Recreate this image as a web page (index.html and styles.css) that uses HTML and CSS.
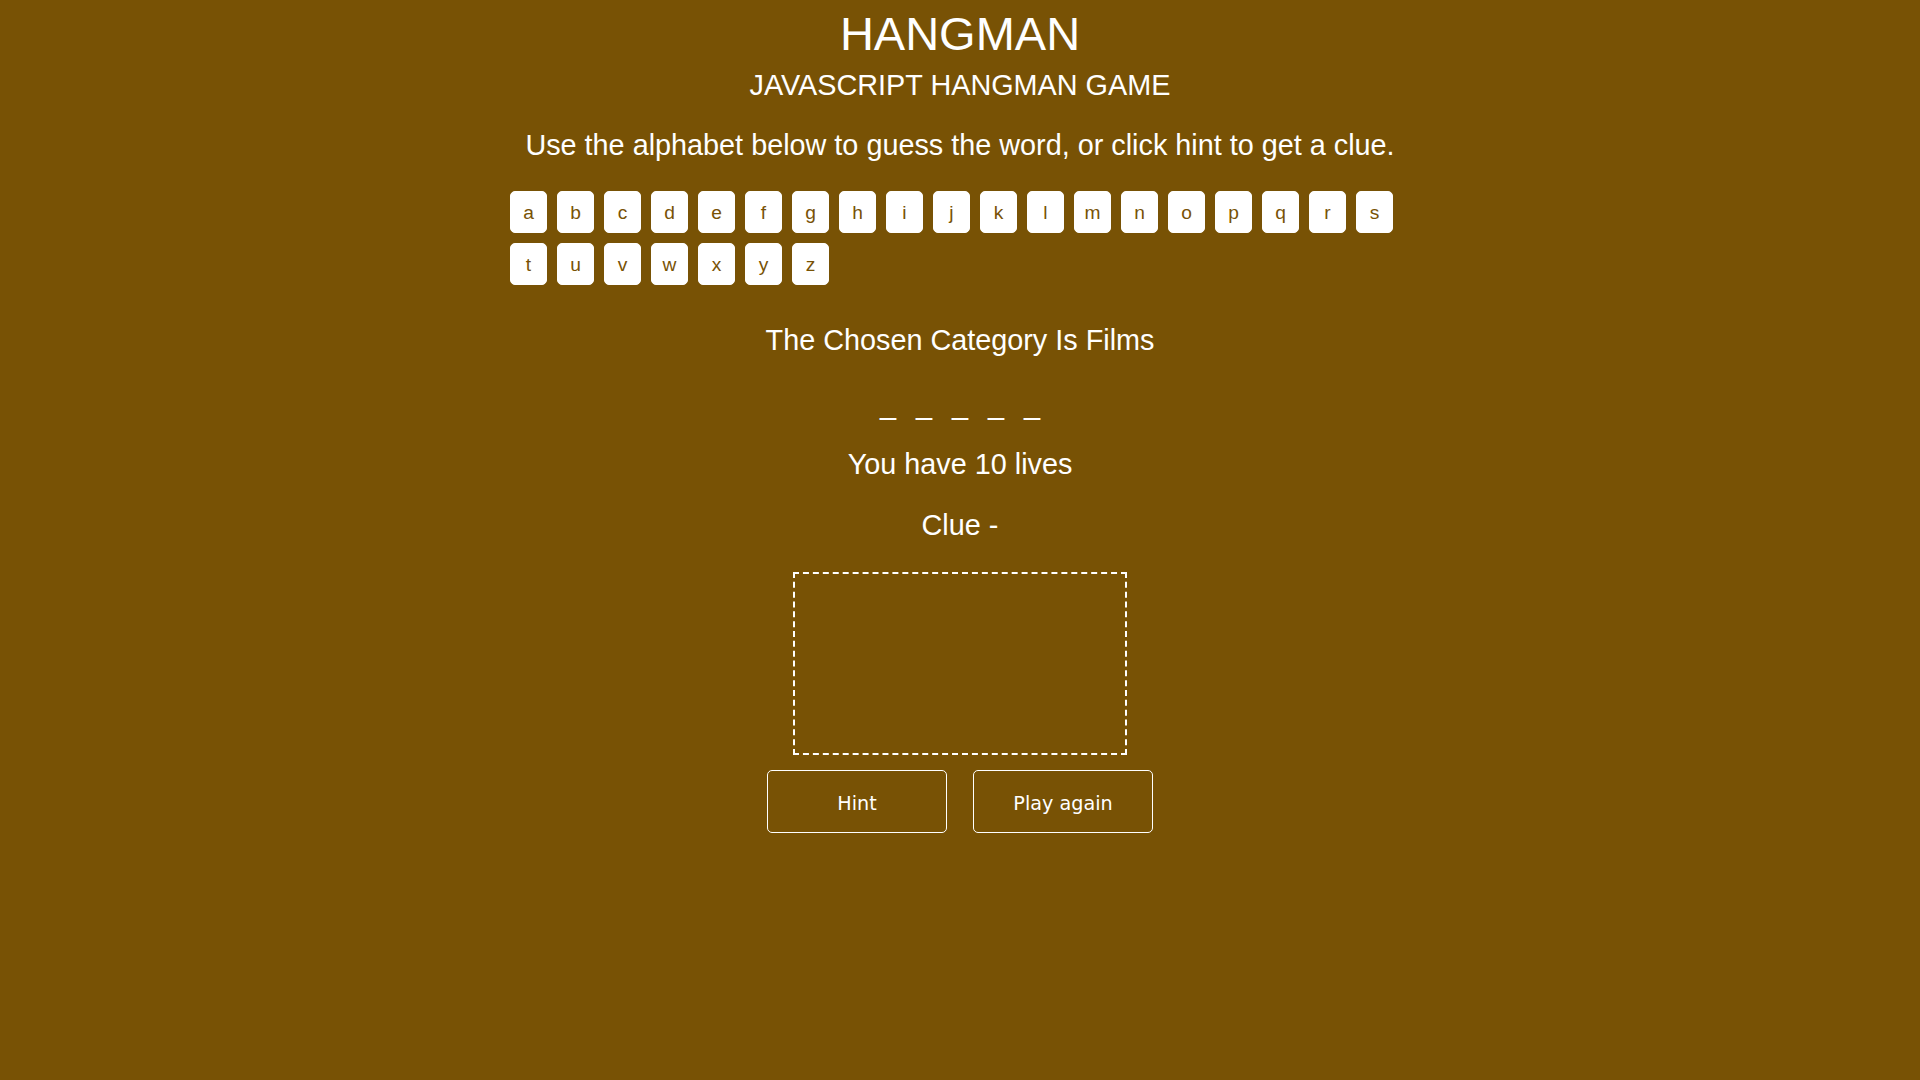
FILE: index.html
```html
<!DOCTYPE html>
<html lang="en">
<head>
<meta charset="utf-8">
<title>Hangman</title>
<link rel="stylesheet" href="styles.css">
</head>
<body>
  <div class="wrapper">
    <h1 class="title">HANGMAN</h1>
    <h2 class="subtitle">JAVASCRIPT HANGMAN GAME</h2>
    <p class="intro">Use the alphabet below to guess the word, or click hint to get a clue.</p>
    <ul class="alphabet">
      <li>a</li><li>b</li><li>c</li><li>d</li><li>e</li><li>f</li><li>g</li><li>h</li><li>i</li><li>j</li><li>k</li><li>l</li><li>m</li><li>n</li><li>o</li><li>p</li><li>q</li><li>r</li><li>s</li><li>t</li><li>u</li><li>v</li><li>w</li><li>x</li><li>y</li><li>z</li>
    </ul>
    <p class="category">The Chosen Category Is Films</p>
    <ul class="word">
      <li>_</li><li>_</li><li>_</li><li>_</li><li>_</li>
    </ul>
    <p class="lives">You have 10 lives</p>
    <p class="clue">Clue -</p>
    <canvas class="stickman" width="330" height="179"></canvas>
    <div class="actions">
      <button class="btn" type="button">Hint</button>
      <button class="btn" type="button">Play again</button>
    </div>
  </div>
</body>
</html>
```
FILE: styles.css
```css
html, body {
  background: #785205;
}
body {
  margin: 8px;
  color: #ffffff;
  font-family: "Liberation Sans", Arial, Helvetica, sans-serif;
  text-align: center;
}
.title {
  margin: 0;
  font-size: 47px;
  line-height: 52px;
  font-weight: normal;
}
.subtitle {
  margin: 8px 0 0;
  font-size: 28.8px;
  line-height: 34px;
  font-weight: normal;
}
.intro,
.category,
.lives,
.clue {
  margin: 0;
  font-size: 28.8px;
  line-height: 34px;
}
.intro { margin-top: 26px; }
.alphabet {
  list-style: none;
  padding: 0;
  margin: 29px auto 0;
  width: 900px;
  display: flex;
  flex-wrap: wrap;
  gap: 10px;
}
.alphabet li {
  box-sizing: content-box;
  width: 35px;
  height: 30px;
  padding-top: 10px;
  border: 1px solid #ffffff;
  border-radius: 5px;
  background: #ffffff;
  color: #785205;
  font-size: 19.2px;
  line-height: 22px;
  text-align: center;
}
.category { margin-top: 38px; }
.word {
  list-style: none;
  padding: 0;
  margin: 30px 0 0;
  display: flex;
  justify-content: center;
}
.word li {
  padding: 0 10px;
  font-size: 28.8px;
  line-height: 34px;
}
.lives { margin-top: 26px; }
.clue { margin-top: 27px; }
.stickman {
  display: block;
  margin: 30px auto 0;
  border: 2px dashed #ffffff;
  width: 330px;
  height: 179px;
}
.actions {
  margin-top: 15px;
  display: flex;
  justify-content: center;
  gap: 26px;
}
.btn {
  box-sizing: border-box;
  width: 180px;
  height: 63px;
  padding: 3px 0 0;
  border: 1px solid #ffffff;
  border-radius: 5px;
  background: transparent;
  color: #ffffff;
  font-family: "DejaVu Sans", Verdana, sans-serif;
  font-size: 19.2px;
}
```
